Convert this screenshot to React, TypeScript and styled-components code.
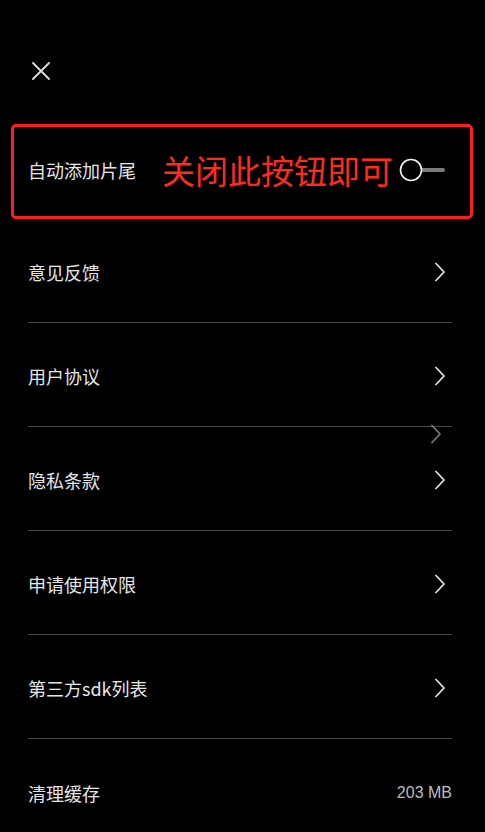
import React from 'react';
import styled, { createGlobalStyle } from 'styled-components';

const GlobalStyle = createGlobalStyle`
  html, body {
    margin: 0;
    padding: 0;
    background: #000;
  }
  * {
    box-sizing: border-box;
  }
`;

const Page = styled.div`
  min-height: 832px;
  background: #000;
  color: #e6e6e6;
  font-family: 'Noto Sans CJK SC', 'Noto Sans', sans-serif;
  display: flex;
  flex-direction: column;
`;

const Header = styled.header`
  height: 124px;
  padding: 62px 0 0 32px;
`;

const CloseButton = styled.button`
  width: 18px;
  height: 18px;
  padding: 0;
  border: none;
  background: none;
  display: block;
  cursor: pointer;
`;

const Highlight = styled.div`
  height: 95px;
  margin: 0 12px 0 11px;
  border: 3px solid #ff1e1e;
  border-radius: 5px;
  display: flex;
  align-items: center;
  padding: 0 25px 3px 14px;
`;

const Label = styled.span`
  font-size: 18px;
  line-height: 24px;
  color: #e6e6e6;
`;

const Note = styled.span`
  margin-left: 26px;
  font-size: 33px;
  line-height: 40px;
  color: #ff2b1c;
  white-space: nowrap;
`;

const Toggle = styled.button`
  margin-left: auto;
  width: 46px;
  height: 24px;
  padding: 0;
  border: none;
  background: none;
  display: block;
`;

const List = styled.div`
  margin: 0 33px 0 28px;
  display: flex;
  flex-direction: column;
`;

const Row = styled.div<{ $last?: boolean }>`
  position: relative;
  height: 104px;
  padding-top: 3px;
  display: flex;
  align-items: center;
  justify-content: space-between;
  border-bottom: ${(p) => (p.$last ? 'none' : '1px solid #4a4a4a')};
`;

const Value = styled.span`
  font-family: 'Liberation Sans', Arial, sans-serif;
  font-size: 16px;
  color: #bdbdbd;
`;

const ChevronBox = styled.span`
  width: 12px;
  height: 20px;
  margin-right: 6px;
  display: block;
`;

const GhostChevron = styled.span`
  position: absolute;
  right: 10px;
  top: 101px;
  width: 12px;
  height: 20px;
  display: block;
`;

const Chevron = ({ color = '#e0e0e0' }: { color?: string }) => (
  <svg width="12" height="20" viewBox="0 0 12 20" fill="none">
    <path d="M2 1.5 L10 10 L2 18.5" stroke={color} strokeWidth="1.8" strokeLinecap="round" strokeLinejoin="round" />
  </svg>
);

const items = ['意见反馈', '用户协议', '隐私条款', '申请使用权限', '第三方sdk列表'];

export default function App() {
  return (
    <>
      <GlobalStyle />
      <Page>
        <Header>
          <CloseButton aria-label="关闭">
            <svg width="18" height="18" viewBox="0 0 18 18">
              <path d="M1 1 L17 17 M17 1 L1 17" stroke="#e0e0e0" strokeWidth="1.8" strokeLinecap="round" />
            </svg>
          </CloseButton>
        </Header>

        <Highlight>
          <Label>自动添加片尾</Label>
          <Note>关闭此按钮即可</Note>
          <Toggle aria-label="自动添加片尾开关">
            <svg width="46" height="24" viewBox="0 0 46 24">
              <path d="M23 12 L44 12" stroke="#7a7a7a" strokeWidth="4" strokeLinecap="round" />
              <circle cx="12" cy="12" r="10.5" fill="#000" stroke="#f2f2f2" strokeWidth="1.6" />
            </svg>
          </Toggle>
        </Highlight>

        <List>
          {items.map((item, i) => (
            <Row key={item}>
              <Label>{item}</Label>
              <ChevronBox>
                <Chevron />
              </ChevronBox>
              {i === 1 && (
                <GhostChevron>
                  <Chevron color="#7a7a7a" />
                </GhostChevron>
              )}
            </Row>
          ))}
          <Row $last>
            <Label>清理缓存</Label>
            <Value>203 MB</Value>
          </Row>
        </List>
      </Page>
    </>
  );
}
